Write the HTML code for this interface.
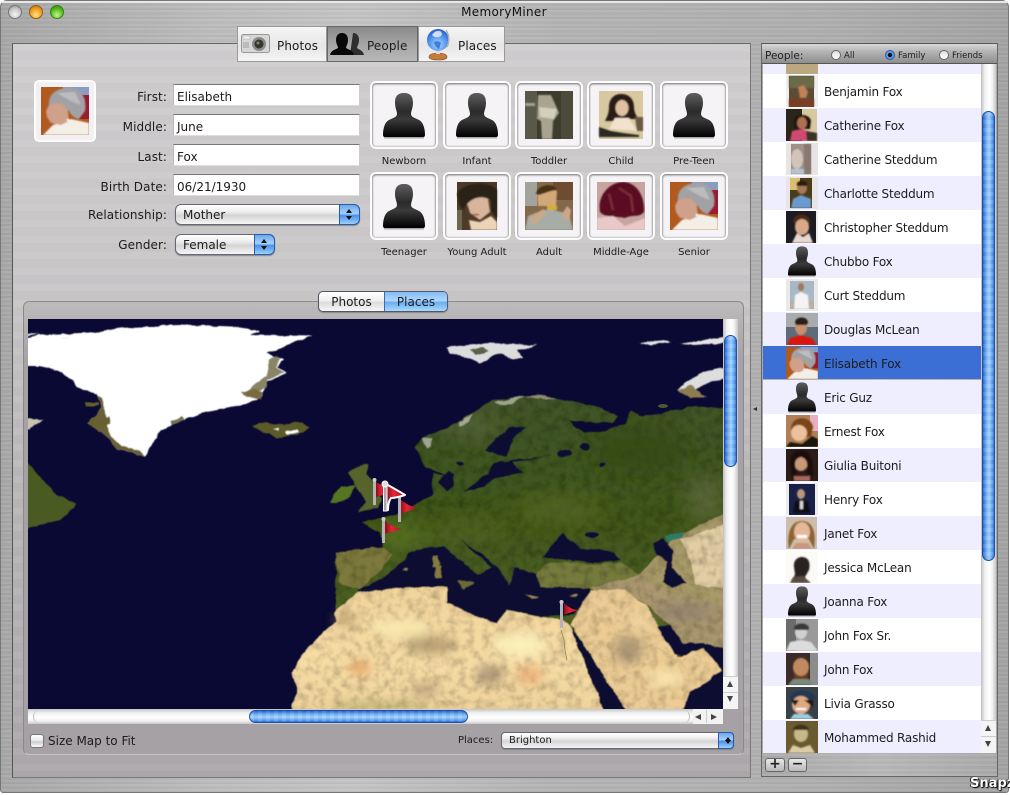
<!DOCTYPE html>
<html><head><meta charset="utf-8"><title>MemoryMiner</title>
<style>
*{box-sizing:border-box}
html,body{margin:0;padding:0;width:1010px;height:795px;overflow:hidden;background:#fff}
body{position:relative;font-family:"DejaVu Sans","Liberation Sans",sans-serif;color:#1c1c1c;font-size:12px}
.lb{position:absolute;text-align:right;right:843px;height:20px;line-height:20px;font-size:12px;white-space:nowrap;letter-spacing:.1px}
.f{position:absolute;left:173px;width:187px;height:22px;background:#fff;border-top:1px solid #777;border-left:1px solid #bbb;border-right:1px solid #ccc;border-bottom:1px solid #ddd;line-height:25px;padding-left:3px;font-size:12px}
.pop{position:absolute;height:21px;border:1px solid #667;border-radius:6px;background:linear-gradient(#fff,#eee 35%,#d4d4d4 55%,#f6f6f6);line-height:21px;padding-left:7px;font-size:12px;box-shadow:0 1px 1px #888}
.pop i{position:absolute;right:-1px;top:-1px;bottom:-1px;width:21px;border-radius:0 6px 6px 0;background:linear-gradient(#6aa8ee,#a8d0fa 45%,#4a90ea 55%,#9cd0fc);border:1px solid #2a5aa8}
.pop i:before,.pop i:after{content:"";position:absolute;left:6px;border-left:3.5px solid transparent;border-right:3.5px solid transparent}
.pop i:before{top:4px;border-bottom:4px solid #111}
.pop i:after{bottom:4px;border-top:4px solid #111}
.w{position:absolute;width:68px;height:68px;border:2px solid #fdfdfd;border-radius:6px;background:#f5f3f6;box-shadow:inset 0 1px 2px #777,inset 0 0 2px #999}
.w svg{position:absolute;left:8px;top:8px;width:48px;height:48px}
.c{position:absolute;width:68px;text-align:center;font-size:10px;white-space:nowrap;height:14px;line-height:14px}
.r{position:absolute;left:763px;width:218px;height:34px;font-size:12px;line-height:37px;padding-left:61px;white-space:nowrap;background:#fff;color:#1c1c1c;letter-spacing:-.2px}
.r.l{background:#eeeeff}
.r.s{background:#3b6fd6;height:33px}
.r svg{position:absolute;left:23px;top:1px;width:32px;height:32px}
.vt{position:absolute;background:linear-gradient(to right,#bdbdbd,#f0f0f0 25%,#fff 55%,#f2f2f2 75%,#c6c6c6)}
.kv{position:absolute;border:1px solid #1c4fa8;border-radius:7px;background:repeating-linear-gradient(rgba(255,255,255,.08) 0 4px,rgba(0,0,40,.03) 4px 8px),linear-gradient(to right,#2a66cc,#74b2f6 30%,#a6d2fc 55%,#5ea0ee 85%,#2f70d6)}
.tab{position:absolute;top:26px;height:36px;line-height:39px;font-size:12px;letter-spacing:.1px;border:1px solid #999;background:linear-gradient(#f6f6f6,#e6e6e6 55%,#f4f4f4)}
.rd{position:absolute;width:10px;height:10px;border-radius:50%;border:1px solid #666;background:linear-gradient(#ddd,#fff)}
.rt{position:absolute;top:49px;font-size:8.5px;height:12px;line-height:15px}
</style></head>
<body>
<svg width="0" height="0" style="position:absolute">
<defs>
<linearGradient id="sh" x1="0" y1="0" x2="0" y2="1"><stop offset="0" stop-color="#5e5e5e"/><stop offset=".42" stop-color="#2a2a2a"/><stop offset=".6" stop-color="#3a3a3a"/><stop offset="1" stop-color="#000"/></linearGradient>
<linearGradient id="fl" x1="0" y1="0" x2="1" y2="0"><stop offset="0" stop-color="#8c0c18"/><stop offset=".4" stop-color="#e02838"/><stop offset="1" stop-color="#b00c1c"/></linearGradient>
<filter id="b"><feGaussianBlur stdDeviation=".7"/></filter>
<filter id="b5"><feGaussianBlur stdDeviation="5"/></filter>
<filter id="b9"><feGaussianBlur stdDeviation="10"/></filter>
<filter id="soft"><feGaussianBlur stdDeviation=".5"/></filter>
<symbol id="sil" viewBox="0 0 48 48"><path d="M24 2C31 2 33 6 33 12C33 17 31 20 31 23C31 26 35 27 39 29C43 31 45 37 45 44Q45 46 43 46L5 46Q3 46 3 44C3 37 5 31 9 29C13 27 17 26 17 23C17 20 15 17 15 12C15 6 17 2 24 2Z" fill="url(#sh)"/><rect x="4" y="46" width="40" height="1.5" fill="#aaa"/></symbol>
<symbol id="senior" viewBox="0 0 48 48"><rect width="48" height="48" fill="#b05a20"/><rect x="22" width="26" height="10" fill="#8a9cc0"/><rect x="38" y="8" width="10" height="24" fill="#9a1c30"/><g filter="url(#b)"><path d="M2 48L12 38L30 32L48 36V48Z" fill="#f4efe6"/><path d="M5 24L9 16L26 16L28 34L20 38L10 36L6 30Z" fill="#cfa08a"/><path d="M8 18C7 6 18 0 30 1C41 2 46 12 44 24L38 32C33 31 30 28 28 24C25 22 23 18 20 16C16 15 11 17 8 18Z" fill="#a2a2a6"/><path d="M16 6L34 5L40 18L30 14Z" fill="#bcbcc0"/><rect x="26" y="32" width="2" height="2" fill="#fff"/></g></symbol>
<symbol id="young" viewBox="0 0 48 48"><rect x="4" width="40" height="48" fill="#4c3a26"/><rect x="4" y="28" width="5" height="20" fill="#6e6650"/><g filter="url(#b)"><path d="M13 18L24 12L35 16L37 30L27 38L17 31Z" fill="#d8b49a"/><path d="M4 12C8 0 38 -2 44 8L44 36L38 30L38 18C30 14 22 14 14 22L10 28L6 22Z" fill="#2c2016"/><path d="M16 38L27 40L38 34L44 40V48H18Z" fill="#ecd4b8"/><path d="M20 32h6v1.500h-6z" fill="#a8484a"/></g></symbol>
<symbol id="adult" viewBox="0 0 48 48"><rect width="48" height="48" fill="#84684a"/><rect width="12" height="24" fill="#a0a49c"/><rect x="28" y="0" width="20" height="18" fill="#6e4c30"/><g filter="url(#b)"><path d="M12 10C14 2 30 2 32 10L31 24H13Z" fill="#d2a878"/><path d="M11 12C12 2 30 0 32 8L26 9L14 13Z" fill="#4a3016"/><path d="M0 48L3 34L18 28H28L44 32L48 48Z" fill="#a6aca6"/><path d="M4 37L18 27L22 31L8 44Z" fill="#c8a888"/><path d="M36 34L42 24L46 28L44 40Z" fill="#c8a888"/><rect x="22" y="24" width="10" height="4" fill="#d8b020"/></g></symbol>
<symbol id="middle" viewBox="0 0 48 48"><rect width="48" height="48" fill="#c8a4a0"/><g filter="url(#b)"><path d="M3 30C0 12 14 0 26 0C38 0 48 12 47 30C42 36 36 32 28 36C20 34 8 36 3 30Z" fill="#5a1020"/><path d="M22 6L34 14L36 30M12 12L16 28" stroke="#7c2a38" stroke-width="2.500" fill="none"/><path d="M0 36L16 34L28 44L48 36V48H0Z" fill="#e8c8c8"/></g></symbol>
<symbol id="child" viewBox="0 0 48 48"><rect width="44" height="48" x="2" fill="#d8c8a0"/><g filter="url(#b)"><path d="M8 30C10 26 12 22 12 16C12 8 17 3 24 3C32 3 37 8 37 16C37 22 40 26 42 28L32 28L16 30Z" fill="#2c1c14"/><ellipse cx="25" cy="17" rx="6.500" ry="8" fill="#e0c0a0"/><path d="M12 38L18 27H32L40 40Z" fill="#f0e2cc"/><path d="M2 36L14 40L26 42L42 44V46L2 46Z" fill="#2c2a20"/><path d="M38 26h8v14h-6z" fill="#6a5a44"/></g></symbol>
<symbol id="toddler" viewBox="0 0 48 48"><rect width="48" height="48" fill="#3e3c2c"/><rect width="12" height="48" fill="#5a5848"/><rect x="36" width="12" height="48" fill="#4c4a38"/><g filter="url(#b)"><path d="M13 4L26 4L34 22L28 30L27 48H17L16 30L12 28Z" fill="#a8a490"/><path d="M14 16L32 18L29 28L15 26Z" fill="#d2cfba"/><rect x="0" y="12" width="10" height="3" fill="#a4a290"/></g></symbol>
</defs></svg>

<!-- window metal -->
<div style="position:absolute;left:0;top:0;width:1009px;height:793px;border-radius:7px 7px 3px 3px;border:1px solid #777;background:repeating-linear-gradient(rgba(255,255,255,.05) 0 2px,rgba(0,0,0,.02) 2px 5px,rgba(255,255,255,.03) 5px 7px,rgba(0,0,0,.035) 7px 9px),linear-gradient(to right,#a8a8a8,#bcbcbc 20%,#c4c4c4 35%,#b4b4b4 55%,#b0b0b0 80%,#a4a4a4)"></div>
<div style="position:absolute;left:1px;top:1px;right:2px;height:2px;background:#e8e8e8"></div>
<div style="position:absolute;left:0;top:0;width:1010px;height:22px;text-align:center;line-height:24px;font-size:12px;color:#111;padding-right:2px;letter-spacing:.3px">MemoryMiner</div>
<!-- traffic lights -->
<div style="position:absolute;left:8px;top:5px;width:14px;height:14px;border-radius:50%;border:1px solid #777;background:radial-gradient(circle at 50% 70%,#f4f4f4,#c8c8c8 55%,#8e8e8e)"></div>
<div style="position:absolute;left:29px;top:5px;width:14px;height:14px;border-radius:50%;border:1px solid #9a5a10;background:radial-gradient(circle at 50% 75%,#ffe08a,#f2a020 55%,#b86a10)"></div>
<div style="position:absolute;left:50px;top:5px;width:14px;height:14px;border-radius:50%;border:1px solid #3c7c1c;background:radial-gradient(circle at 50% 75%,#c8f48a,#58c020 55%,#2c8010)"></div>

<!-- left main panel -->
<div style="position:absolute;left:12px;top:43px;width:739px;height:735px;border:1px solid #555;border-bottom-color:#777;border-right-color:#777;border-top-color:#666;background:repeating-linear-gradient(rgba(255,255,255,.04) 0 7px,rgba(0,0,0,.012) 7px 16px),linear-gradient(#cfcdce,#c8c6c7 35%,#bab7b9 60%,#aca8ab)"></div>

<!-- tabs -->
<div class="tab" style="left:237px;width:90px;padding-left:39px">Photos</div>
<div class="tab" style="left:327px;width:91px;padding-left:39px;border-color:#666;background:linear-gradient(#8a8a8a,#a4a4a4 50%,#b8b8b8)">People</div>
<div class="tab" style="left:418px;width:87px;padding-left:39px">Places</div>
<svg style="position:absolute;left:241px;top:34px" width="30" height="20"><rect x=".5" y=".5" width="28" height="18" rx="2" fill="#d6d6d6" stroke="#999"/><rect x="2" y="2" width="7" height="3" fill="#f2f2f2" stroke="#aaa" stroke-width=".5"/><rect x="2" y="8" width="6" height="6" fill="#bbb"/><circle cx="18" cy="10" r="7" fill="#8a8a8a"/><circle cx="18" cy="10" r="4.5" fill="#33382c"/><circle cx="17" cy="9" r="1.5" fill="#7c8668"/></svg>
<svg style="position:absolute;left:330px;top:32px" width="34" height="24"><path d="M23 1c4 0 6 3 6 7c0 4-2 6-2 8c2 2 6 2 7 7h-14z" fill="#2e2e2e"/><path d="M12 1c4 0 6 3 6 7c0 4-2 6-2 8c3 2 7 2 8 7H0c1-5 5-5 8-7c0-2-2-4-2-8c0-4 2-7 6-7z" fill="#080808"/></svg>
<svg style="position:absolute;left:426px;top:27px" width="26" height="34"><path d="M3 30c0-3 5-4 9-4s9 1 9 4c0 2-4 3-9 3s-9-1-9-3z" fill="#c87a38" stroke="#7a4a20" stroke-width=".6"/><rect x="10" y="22" width="4" height="5" fill="#d8d8d8"/><defs><radialGradient id="gl" cx=".5" cy=".7" r=".75"><stop offset="0" stop-color="#a8d8ff"/><stop offset=".6" stop-color="#4a8cea"/><stop offset="1" stop-color="#1c52b8"/></radialGradient></defs><circle cx="12" cy="13" r="11" fill="url(#gl)"/><path d="M6 8q3-5 8-4q3 2 1 5q-5 3-9-1z" fill="#e4f0ff" opacity=".85"/><path d="M8 15q4-2 7 1l-2 6q-4-2-5-7z" fill="#2c66cc" opacity=".8"/><path d="M20 3q5 8 1 17" stroke="#b0b0b0" stroke-width="1.500" fill="none"/></svg>

<!-- avatar -->
<div class="w" style="left:34px;top:80px;width:62px;height:62px;border-width:2px;box-shadow:none;background:#f2f0f3;border-radius:5px"><svg style="left:5px;top:5px;width:48px;height:48px"><use href="#senior"/></svg></div>

<!-- form -->
<div class="lb" style="top:87px">First:</div>
<div class="lb" style="top:117px">Middle:</div>
<div class="lb" style="top:147px">Last:</div>
<div class="lb" style="top:177px">Birth Date:</div>
<div class="lb" style="top:205px">Relationship:</div>
<div class="lb" style="top:235px">Gender:</div>
<div class="f" style="top:84px">Elisabeth</div>
<div class="f" style="top:114px">June</div>
<div class="f" style="top:144px">Fox</div>
<div class="f" style="top:174px">06/21/1930</div>
<div class="pop" style="left:175px;top:204px;width:185px">Mother<i></i></div>
<div class="pop" style="left:175px;top:234px;width:100px">Female<i></i></div>

<!-- wells -->
<div class="w" style="left:370px;top:81px"><svg><use href="#sil"/></svg></div>
<div class="w" style="left:443px;top:81px"><svg><use href="#sil"/></svg></div>
<div class="w" style="left:515px;top:81px"><svg><use href="#toddler"/></svg></div>
<div class="w" style="left:587px;top:81px"><svg><use href="#child"/></svg></div>
<div class="w" style="left:660px;top:81px"><svg><use href="#sil"/></svg></div>
<div class="w" style="left:370px;top:172px"><svg><use href="#sil"/></svg></div>
<div class="w" style="left:443px;top:172px"><svg><use href="#young"/></svg></div>
<div class="w" style="left:515px;top:172px"><svg><use href="#adult"/></svg></div>
<div class="w" style="left:587px;top:172px"><svg><use href="#middle"/></svg></div>
<div class="w" style="left:660px;top:172px"><svg><use href="#senior"/></svg></div>
<div class="c" style="left:370px;top:155px">Newborn</div>
<div class="c" style="left:443px;top:155px">Infant</div>
<div class="c" style="left:515px;top:155px">Toddler</div>
<div class="c" style="left:587px;top:155px">Child</div>
<div class="c" style="left:660px;top:155px">Pre-Teen</div>
<div class="c" style="left:370px;top:246px">Teenager</div>
<div class="c" style="left:443px;top:246px">Young Adult</div>
<div class="c" style="left:515px;top:246px">Adult</div>
<div class="c" style="left:587px;top:246px">Middle-Age</div>
<div class="c" style="left:660px;top:246px">Senior</div>

<!-- group box -->
<div style="position:absolute;left:23px;top:301px;width:721px;height:454px;border:1px solid #8a8a8a;border-bottom-color:#c4c2c3;border-radius:6px;background:linear-gradient(#bdbbbc,#a5a1a4 60px,#a5a1a4)"></div>
<!-- segmented -->
<div style="position:absolute;left:318px;top:291px;width:130px;height:21px;border:1px solid #556;border-radius:5px;background:linear-gradient(#fff,#f0f0f0 45%,#dcdcdc 55%,#f8f8f8);box-shadow:0 1px 1px #888;overflow:hidden">
<div style="position:absolute;left:0;width:65px;top:0;height:19px;line-height:21px;text-align:center;font-size:12px">Photos</div>
<div style="position:absolute;left:65px;right:0;top:0;height:19px;line-height:21px;text-align:center;font-size:12px;border-left:1px solid #3a6ab0;background:linear-gradient(#80bcf6,#b0d8fc 45%,#6cacf2 55%,#a8dcfc)">Places</div></div>

<!-- map -->
<svg style="position:absolute;left:28px;top:319px" width="695" height="390" viewBox="28 319 695 390">
<defs>
<filter id="tx" x="0" y="0" width="100%" height="100%"><feTurbulence type="fractalNoise" baseFrequency=".12" numOctaves="3" seed="4"/><feColorMatrix values="0 0 0 0 0  0 0 0 0 0  0 0 0 0 0  .9 0 0 0 -.36"/><feComposite in2="SourceAlpha" operator="in" result="n"/><feMerge><feMergeNode in="SourceGraphic"/><feMergeNode in="n"/></feMerge></filter>
<filter id="coast" filterUnits="userSpaceOnUse" x="0" y="300" width="760" height="430"><feTurbulence type="fractalNoise" baseFrequency=".09" numOctaves="4" seed="11" result="t"/><feDisplacementMap in="SourceGraphic" in2="t" scale="4" xChannelSelector="R" yChannelSelector="G"/><feGaussianBlur stdDeviation=".4"/></filter>
<clipPath id="euc"><path d="M336 552L383 547L380 533L362 522L378 518L397 515L417 503L432 495L433 473L447 475L425 467L415 447L423 438L457 423L493 400L537 395L560 399L603 408L618 417L612 423L570 421L583 432L603 432L625 424L630 410L643 417L690 407L735 408L735 720L336 720Z"/></clipPath>
<linearGradient id="eu" x1="0" y1="0" x2="0" y2="1"><stop offset="0" stop-color="#42552a"/><stop offset=".35" stop-color="#40561e"/><stop offset=".7" stop-color="#4e6024"/><stop offset="1" stop-color="#5a5e2c"/></linearGradient>
<linearGradient id="af" x1="0" y1="0" x2="0" y2="1"><stop offset="0" stop-color="#f2d49c"/><stop offset=".6" stop-color="#f6dca4"/><stop offset="1" stop-color="#ecd098"/></linearGradient>
</defs>
<rect x="28" y="319" width="695" height="390" fill="#0a0933"/>
<g filter="url(#coast)">
<!-- Greenland -->
<path d="M20 339L40 335L80 333L100 332L120 328L180 325L233 327L260 331L250 335L313 336L287 345L267 353L283 360L277 368L287 373L267 382L263 397L250 403L203 413L177 423L160 430L145 457L133 452L117 450L108 438L88 423L102 407L97 395L77 387L63 372L40 366L20 366Z" fill="#fff"/>
<path d="M20 332l20 2l-20 2zM60 338l8-1v2z" fill="#e8e8f0"/>
<path d="M63 372L77 387L97 395L103 399L104 410L108 424L110 436L122 446L140 450L145 457L133 452L117 450L108 438L88 423L102 407L97 395L77 387Z" fill="#6a6034"/>
<path d="M86 402l12-1l1 4l-12 1zM89 420l20-3l2 7l-20 2z" fill="#665e2e"/>
<path d="M270 358l7-2l3 4l-4 8l8 5l-16 7l-2 8l-8 5l-12 0l8-9l12-8z" fill="#6a6640" opacity=".8"/>
<path d="M240 392l16-3l8 4l-2 6l-14-1z" fill="#7a6a40"/>
<path d="M170 421l12-4l2 3l-12 5z" fill="#777050"/>
<!-- Baffin -->
<path d="M20 417L43 420L30 429L20 429Z" fill="#c8c4b0"/>
<!-- Iceland -->
<path d="M252 425L267 422L273 425L303 422L310 427L297 435L277 438L263 432Z" fill="#5c5a28"/>
<path d="M285 431l12-1l2 2l-12 3zM273 430l6-1v2z" fill="#fff"/>
<!-- Canada -->
<path d="M20 455L37 473L53 492L75 503L73 509L60 520L40 525L20 532Z" fill="#4a5a22"/>
<!-- Ireland+UK -->
<path d="M340 487L355 485L350 498L338 503L330 503L334 495Z" fill="#567422"/>
<path d="M347 472L362 465L368 463L367 474L373 482L382 500L377 508L358 512L367 502L358 490Z" fill="#56642a"/>
<!-- Eurasia -->
<path d="M336 552L383 547L380 533L362 522L378 518L397 515L417 503L432 495L433 473L447 475L425 467L415 447L423 438L457 423L493 400L537 395L560 399L603 408L618 417L612 423L570 421L583 432L603 432L625 424L630 410L643 417L690 407L735 408L735 720L336 720Z" fill="url(#eu)" filter="url(#tx)"/>
<g clip-path="url(#euc)"><g filter="url(#b9)">
<ellipse cx="400" cy="535" rx="28" ry="14" fill="#5e7a24" opacity=".7"/>
<ellipse cx="470" cy="530" rx="40" ry="12" fill="#566a26" opacity=".6"/>
<ellipse cx="560" cy="510" rx="45" ry="16" fill="#5a6c26" opacity=".6"/>
<ellipse cx="640" cy="450" rx="50" ry="25" fill="#334814" opacity=".7"/>
<ellipse cx="470" cy="425" rx="30" ry="12" fill="#6a7048" opacity=".5"/>
<ellipse cx="705" cy="500" rx="18" ry="26" fill="#6a7048" opacity=".6"/>
</g></g>
<!-- Scandinavia snow -->
<path d="M423 438l3 10l4-3l3-6zM460 422l14-8l-5 8l-10 4zM495 402l30-6l-14 8l-12 1z" fill="#c8c8b8" opacity=".7"/>
<path d="M525 396l20-1l12 4l-20 0z" fill="#b0a890" opacity=".7"/>
<!-- Iberia -->
<path d="M335 552L383 547L393 556L375 575L360 590L340 582Z" fill="#7e7a3c" filter="url(#tx)"/>
<!-- Turkey -->
<path d="M537 573L545 565L565 562L593 565L620 562L640 575L625 585L590 588L540 587Z" fill="#767a3c" filter="url(#tx)"/>
<!-- central asia sand -->
<path d="M640 575L672 540L700 525L735 510L735 650L703 643L683 643L670 625L640 600Z" fill="#a89a68" filter="url(#tx)"/>
<path d="M680 540L735 520L735 590L695 585L690 560Z" fill="#e2ceA4" filter="url(#tx)"/>
<path d="M590 588L640 575L660 590L700 600L735 605L735 650L703 643L683 643L670 625L640 600L595 592Z" fill="#ab9870" filter="url(#tx)"/>
<!-- seas -->
<g fill="#0a0933">
<path d="M485 450L497 437L510 427L528 427L513 438L507 457L490 453Z"/>
<path d="M470 487L487 473L493 463L517 460L552 455L513 463L523 473L497 478L483 487L463 492Z"/>
<path d="M447 470l6 4l2 12l-8 6l-8-10z"/>
<ellipse cx="564" cy="453" rx="7" ry="4"/><ellipse cx="585" cy="447" rx="5" ry="4"/><ellipse cx="602" cy="465" rx="3" ry="2"/><ellipse cx="461" cy="463" rx="4" ry="2"/>
<path d="M358 590L380 580L387 573L405 560L408 552L437 546L443 546L478 574L492 568L459 539L480 552L497 567L510 585L515 567L537 573L540 587L590 588L588 598L573 615L540 617L507 610L497 623L477 617L447 603L447 587L413 587L380 590L358 596Z"/>
<path d="M543 558L550 547L563 533L573 542L580 547L613 552L620 560L593 563L567 560Z"/>
<ellipse cx="592" cy="535" rx="7" ry="3"/>
<path d="M653 543L663 538L673 550L672 567L688 583L673 588L662 582L667 563L655 553Z"/>
</g>
<path d="M665 536l20-4l-2 6l-14 4z" fill="#2f7a62"/>
<!-- Med islands -->
<path d="M433 556l5-1l1 9l-1 3l-5 0zM436 566h5v12h-6z" fill="#857a40"/>
<path d="M457 581l14 0l4 2l-12 6z" fill="#6a6c34"/>
<path d="M525 595l14 1l-6 2zM568 596l10-2l-2 3z" fill="#9c8c54"/>
<path d="M402 570l6-1l-2 3z" fill="#9c8c54"/>
<!-- Arabia -->
<path d="M570 625L590 590L625 590L645 605L670 645L678 657L703 648L722 670L690 693L677 720L627 720L620 700L600 670L580 638Z" fill="#eccc94" filter="url(#tx)"/>
<!-- gulf -->
<path d="M657 627L670 625L683 643L703 643L735 650L735 720L677 720L690 693L722 670L703 648L685 655L675 655L665 640Z" fill="#0a0933"/>
<!-- Africa -->
<path d="M357 593L380 590L413 587L447 587L447 603L477 617L497 623L507 610L540 617L563 620L570 627L590 677L608 720L290 720L297 687L292 673L303 653L320 635L337 622L333 613Z" fill="url(#af)" filter="url(#tx)"/>
<!-- red sea -->
<path d="M570 627L580 638L600 670L620 700L632 720L608 720L590 677Z" fill="#0a0933"/>
</g>
<!-- Africa mottles -->
<g filter="url(#b5)">
<ellipse cx="430" cy="645" rx="26" ry="10" fill="#a8906a" opacity=".7"/>
<ellipse cx="490" cy="675" rx="14" ry="10" fill="#95806a" opacity=".7"/>
<ellipse cx="425" cy="690" rx="14" ry="7" fill="#a89070" opacity=".6"/>
<ellipse cx="360" cy="668" rx="12" ry="5" fill="#e48c50" opacity=".8"/>
<ellipse cx="400" cy="628" rx="30" ry="9" fill="#f8e8ae"/>
<ellipse cx="520" cy="645" rx="26" ry="12" fill="#fbeeb8"/>
<ellipse cx="530" cy="675" rx="14" ry="9" fill="#e89e68" opacity=".6"/>
<ellipse cx="345" cy="620" rx="12" ry="5" fill="#a48a60" opacity=".7"/>
<ellipse cx="628" cy="650" rx="14" ry="14" fill="#96826a" opacity=".7"/>
<ellipse cx="665" cy="678" rx="18" ry="9" fill="#f8e2a8"/>
<ellipse cx="380" cy="706" rx="50" ry="3" fill="#9a9a58" opacity=".8"/>
<ellipse cx="685" cy="612" rx="28" ry="9" fill="#8c7c6e" opacity=".6"/>
<ellipse cx="640" cy="622" rx="12" ry="9" fill="#f0d4a0" opacity=".8"/>
</g>
<path d="M561 630l3 10l1 10l2 10" stroke="#7a8a48" stroke-width=".7" fill="none"/>
<!-- Arctic islands -->
<g filter="url(#coast)">
<path d="M447 347L490 343L538 345L517 350L523 358L513 360L500 353L480 364L465 357L450 353Z" fill="#dcdcdc"/>
<path d="M470 350l14-3l4 4l-12 4z" fill="#5a6048"/>
<path d="M638 343l28-3l4 2l-20 3zM679 344l56-9v7l-40 3z" fill="#e4e4e4"/>
<path d="M677 390L687 382L703 372L735 366L735 374L703 385L695 390L707 397L690 397Z" fill="#ddd"/>
<path d="M677 390L692 385L695 390L707 397L690 397Z" fill="#8c7c50"/>
</g>
<ellipse cx="663" cy="406" rx="5" ry="2" fill="#4a5a30"/>
<!-- Flags -->
<g>
<path d="M376 482L389 489L387 494L376 497Z" fill="url(#fl)"/>
<rect x="373" y="479" width="3" height="26" fill="#b4b4b8"/><circle cx="374.500" cy="480" r="2" fill="#ccc"/>
<path d="M400 499Q408 506 417 508Q408 511 400 514Z" fill="url(#fl)"/>
<rect x="398" y="497" width="3" height="25" fill="#b4b4b8"/>
<path d="M386 484Q397 490 405 495Q396 498 391 498Q388 502 388 510L386 510Z" fill="url(#fl)" stroke="#fff" stroke-width="2" stroke-linejoin="round"/>
<rect x="383.500" y="484" width="3.500" height="27" fill="#a8a8ac" stroke="#fff" stroke-width="1"/><circle cx="385" cy="484" r="3" fill="#ddd" stroke="#fff"/>
<path d="M385 521Q393 528 402 529Q393 531 385 534Z" fill="url(#fl)"/>
<rect x="382" y="518" width="3" height="25" fill="#b4b4b8"/><circle cx="383.500" cy="519" r="2" fill="#ccc"/>
<path d="M564 603Q571 610 579 610Q571 612 564 615Z" fill="url(#fl)"/>
<rect x="560" y="601" width="3" height="27" fill="#b4b4b8"/><circle cx="561.500" cy="602" r="2" fill="#ccc"/>
</g>
</svg>

<!-- map scrollbars -->
<div class="vt" style="left:723px;top:319px;width:15px;height:390px"></div>
<div class="kv" style="left:724px;top:335px;width:13px;height:132px"></div>
<div style="position:absolute;left:723px;top:676px;width:15px;height:33px;background:#f4f4f4;border-top:1px solid #ccc"></div>
<div style="position:absolute;left:727px;top:681px;border-left:3.500px solid transparent;border-right:3.500px solid transparent;border-bottom:6px solid #444"></div>
<div style="position:absolute;left:723px;top:692px;width:15px;height:1px;background:#ccc"></div>
<div style="position:absolute;left:727px;top:696px;border-left:3.500px solid transparent;border-right:3.500px solid transparent;border-top:6px solid #444"></div>
<div style="position:absolute;left:28px;top:709px;width:695px;height:15px;background:linear-gradient(#c4c4c4,#f0f0f0 25%,#fff 55%,#f0f0f0 80%,#c8c8c8)"></div>
<div style="position:absolute;left:33px;top:710px;width:657px;height:13px;border:1px solid #bbb;border-top:0;border-bottom:0;border-radius:7px"></div>
<div style="position:absolute;left:249px;top:710px;width:219px;height:13px;border:1px solid #1c4fa8;border-radius:7px;background:repeating-linear-gradient(to right,rgba(255,255,255,.08) 0 4px,rgba(0,0,40,.03) 4px 8px),linear-gradient(#2a66cc,#74b2f6 30%,#a6d2fc 55%,#5ea0ee 85%,#2f70d6)"></div>
<div style="position:absolute;left:693px;top:709px;width:30px;height:15px;background:#f2f2f2"></div>
<div style="position:absolute;left:695px;top:714px;border-top:3.500px solid transparent;border-bottom:3.500px solid transparent;border-right:6px solid #444"></div>
<div style="position:absolute;left:706px;top:710px;width:1px;height:13px;background:#ccc"></div>
<div style="position:absolute;left:711px;top:714px;border-top:3.500px solid transparent;border-bottom:3.500px solid transparent;border-left:6px solid #444"></div>
<div style="position:absolute;left:723px;top:709px;width:15px;height:15px;background:#a5a1a4"></div>

<!-- bottom controls -->
<div style="position:absolute;left:30px;top:734px;width:14px;height:14px;border:1px solid #777;border-radius:3px;background:linear-gradient(#fff,#e8e8e8 50%,#ccc 55%,#fafafa)"></div>
<div style="position:absolute;left:48px;top:733px;font-size:12px;height:16px;line-height:17px;white-space:nowrap">Size Map to Fit</div>
<div style="position:absolute;left:458px;top:734px;font-size:10px;height:14px;line-height:14px">Places:</div>
<div class="pop" style="left:501px;top:732px;width:233px;height:17px;line-height:15px;font-size:10px;border-radius:4px">Brighton<i style="width:16px;border-radius:0 4px 4px 0"></i></div>

<!-- right panel -->
<div style="position:absolute;left:761px;top:43px;width:237px;height:734px;border:1px solid #666;border-top-color:#555;background:repeating-linear-gradient(rgba(255,255,255,.06) 0 2px,rgba(0,0,0,.02) 2px 5px),linear-gradient(to right,#aaa,#b8b8b8 50%,#aaa)"></div>
<div style="position:absolute;left:762px;top:44px;width:235px;height:20px;border-bottom:1px solid #555;background:linear-gradient(#d8d8d8,#b4b4b4 40%,#8e8e8e)"></div>
<div style="position:absolute;left:765px;top:49px;font-size:10.5px;height:14px;line-height:14px">People:</div>
<div class="rd" style="left:831px;top:50px"></div><div class="rt" style="left:844px">All</div>
<div class="rd" style="left:885px;top:50px;background:radial-gradient(circle,#111 2px,#6aaaf0 2.500px,#3a7ad8);border-color:#2a5aa8"></div><div class="rt" style="left:898px">Family</div>
<div class="rd" style="left:939px;top:50px"></div><div class="rt" style="left:952px">Friends</div>

<!-- list -->
<div class="r l" style="top:64px;height:10px;overflow:hidden"><svg style="top:-22px"><rect x="0" y="0" width="32" height="32" fill="#bca880"/></svg></div>
<div class="r" style="top:74px">Benjamin Fox<svg viewBox="0 0 32 32"><rect width="32" height="32" fill="#eee"/><rect x="3" y="1" width="25" height="31" fill="#5c4c34"/><rect x="3" y="1" width="25" height="12" fill="#6a6a48" filter="url(#b)"/><path d="M12 12l6-2l4 7l-2 6h-6z" fill="#c08058" filter="url(#b)"/><rect x="3" y="24" width="25" height="8" fill="#7a3c28" filter="url(#b)"/></svg></div>
<div class="r l" style="top:108px">Catherine Fox<svg viewBox="0 0 32 32"><rect width="32" height="32" fill="#2c2418"/><rect x="16" width="15" height="32" fill="#d8c8a0"/><rect x="31" width="1" height="32" fill="#eef"/><g filter="url(#b)"><path d="M8 12c0-8 16-8 17 0l-1 8H9z" fill="#1c1410"/><ellipse cx="16" cy="14" rx="5" ry="6" fill="#b07050"/><path d="M4 32l2-10l10-2l10 4l2 8z" fill="#d04870"/><path d="M20 22l11 2v8H21z" fill="#3a3028"/></g></svg></div>
<div class="r" style="top:142px">Catherine Steddum<svg viewBox="0 0 32 32"><rect width="32" height="32" fill="#e8e4e4"/><rect x="5" y="1" width="20" height="30" fill="#a09088"/><g filter="url(#b)"><ellipse cx="11" cy="16" rx="6" ry="10" fill="#d0c4bc"/><rect x="5" y="26" width="16" height="5" fill="#b4c4d4"/><rect x="18" y="1" width="7" height="30" fill="#887870"/></g></svg></div>
<div class="r l" style="top:176px">Charlotte Steddum<svg viewBox="0 0 32 32"><rect width="32" height="32" fill="#e8e4e8"/><rect x="4" y="1" width="22" height="30" fill="#4a3c18"/><rect x="4" y="1" width="10" height="12" fill="#d8c070"/><g filter="url(#b)"><ellipse cx="16" cy="11" rx="5" ry="6" fill="#a87858"/><path d="M11 6c2-3 8-3 10 0v3H11z" fill="#2c1c10"/><path d="M5 31l2-9l8-4l10 4v9z" fill="#6a9ad0"/></g></svg></div>
<div class="r" style="top:210px">Christopher Steddum<svg viewBox="0 0 32 32"><rect width="32" height="32" fill="#1c1c22"/><rect x="30" width="2" height="32" fill="#eee"/><g filter="url(#b)"><path d="M7 10c0-8 16-9 17 0l-1 3H9z" fill="#4a2c18"/><ellipse cx="16" cy="16" rx="7" ry="8" fill="#d8a888"/><path d="M6 32l5-10l6 4l6-4l4 10z" fill="#e8d8d0"/></g></svg></div>
<div class="r l" style="top:244px">Chubbo Fox<svg viewBox="0 0 48 48"><use href="#sil"/></svg></div>
<div class="r" style="top:278px">Curt Steddum<svg viewBox="0 0 32 32"><rect width="32" height="32" fill="#ebe8ea"/><rect x="4" y="2" width="24" height="28" fill="#a8b8c4"/><rect x="4" y="22" width="24" height="8" fill="#b8b0a0"/><g filter="url(#b)"><ellipse cx="15" cy="8" rx="3" ry="4" fill="#a07858"/><path d="M8 30l1-14l6-3l7 3l1 14z" fill="#f4f4f4"/></g></svg></div>
<div class="r l" style="top:312px">Douglas McLean<svg viewBox="0 0 32 32"><rect width="32" height="32" fill="#a8acac"/><rect y="14" width="32" height="18" fill="#5c6c78"/><g filter="url(#b)"><ellipse cx="15" cy="14" rx="6" ry="8" fill="#c89070"/><path d="M9 9c1-6 12-6 13 0l-1 3H10z" fill="#2a1c14"/><path d="M1 32l3-7l11-3l11 3l5 7z" fill="#d81810"/></g></svg></div>
<div class="r s" style="top:346px">Elisabeth Fox<svg viewBox="0 0 48 48"><use href="#senior"/></svg></div>
<div class="r l" style="top:380px">Eric Guz<svg viewBox="0 0 48 48"><use href="#sil"/></svg></div>
<div class="r" style="top:414px">Ernest Fox<svg viewBox="0 0 32 32"><rect width="32" height="32" fill="#b08058"/><rect x="24" width="8" height="16" fill="#e8b0c0"/><g filter="url(#b)"><path d="M5 14c0-14 20-14 22-2l-2 10H7z" fill="#7a4414"/><ellipse cx="13" cy="18" rx="8" ry="8" fill="#ecc09c"/><path d="M0 32l4-5l12 2l10-8l6 3v8z" fill="#1c1410"/></g></svg></div>
<div class="r l" style="top:448px">Giulia Buitoni<svg viewBox="0 0 32 32"><rect width="32" height="32" fill="#2c1c18"/><g filter="url(#b)"><ellipse cx="15" cy="13" rx="7" ry="9" fill="#c89878"/><path d="M15 1c-9 0-12 8-11 16l3 14l4-8c-3-8-3-13 4-15c7 2 7 8 5 15l6 7c2-10 2-29-11-29z" fill="#1c100c"/><rect x="8" y="27" width="16" height="5" fill="#a86858"/></g></svg></div>
<div class="r" style="top:482px">Henry Fox<svg viewBox="0 0 32 32"><rect width="32" height="32" fill="#ececec"/><rect x="3" y="1" width="26" height="31" fill="#1a2048"/><g filter="url(#b)"><ellipse cx="15" cy="11" rx="4" ry="5" fill="#b89878"/><path d="M7 30l2-11l6-3l7 3l2 11z" fill="#0c0c14"/><path d="M14 18h3v8h-3z" fill="#d8d8d8"/></g></svg></div>
<div class="r l" style="top:516px">Janet Fox<svg viewBox="0 0 32 32"><rect width="32" height="32" fill="#eeeeff"/><rect width="31" height="32" fill="#cdbeac"/><g filter="url(#b)"><path d="M3 32c-2-12 0-28 13-28c13 0 14 16 12 28l-5-10H8z" fill="#8c6434"/><ellipse cx="16" cy="15" rx="8" ry="10" fill="#e6b898"/><rect x="11" y="18" width="10" height="3" fill="#fff"/><path d="M6 32l4-6l12 0l4 6z" fill="#c89880"/></g></svg></div>
<div class="r" style="top:550px">Jessica McLean<svg viewBox="0 0 32 32"><rect width="32" height="32" fill="#fbfaf6"/><g filter="url(#b)"><path d="M8 16c-1-8 6-12 12-9c4 2 4 8 3 12l-4 7l3 6H6l3-9z" fill="#2c2420"/><path d="M4 32l3-6l10-1l8 7z" fill="#5c4c44"/></g></svg></div>
<div class="r l" style="top:584px">Joanna Fox<svg viewBox="0 0 48 48"><use href="#sil"/></svg></div>
<div class="r" style="top:618px">John Fox Sr.<svg viewBox="0 0 32 32"><rect width="32" height="32" fill="#999"/><rect x="0" width="10" height="32" fill="#6c6c6c"/><g filter="url(#b)"><ellipse cx="15" cy="13" rx="6" ry="7" fill="#d0d0d0"/><path d="M8 9c1-6 14-6 15 0l-1 2H9z" fill="#383838"/><path d="M0 32l4-9l11-2l10 2l7 9z" fill="#dcdcdc"/></g></svg></div>
<div class="r l" style="top:652px">John Fox<svg viewBox="0 0 32 32"><rect width="32" height="32" fill="#3c2c28"/><rect x="24" width="8" height="32" fill="#8c8c8c"/><g filter="url(#b)"><ellipse cx="15" cy="14" rx="8" ry="9" fill="#c08a60"/><path d="M7 17c2 8 14 8 16 0l-2 10H9z" fill="#6a3a20"/><path d="M2 32l5-6l16 0l5 6z" fill="#7a8a78"/></g></svg></div>
<div class="r" style="top:686px">Livia Grasso<svg viewBox="0 0 32 32"><rect width="32" height="32" fill="#384048"/><g filter="url(#b)"><path d="M4 11C6 1 26 1 30 11l-2 2H4z" fill="#243852"/><ellipse cx="15" cy="18" rx="9" ry="9" fill="#e0a880"/><path d="M5 13h8l-4 6zM18 13h9v7z" fill="#1c1410"/><rect x="10" y="21" width="10" height="2" fill="#fff"/><path d="M4 32l4-5h14l6 5z" fill="#9ccce0"/></g></svg></div>
<div class="r l" style="top:720px;height:33px">Mohammed Rashid<svg viewBox="0 0 32 32"><rect width="32" height="32" fill="#6a5a30"/><g filter="url(#b)"><ellipse cx="15" cy="13" rx="7" ry="8" fill="#c8b888"/><path d="M7 9c1-7 15-7 16 0H7z" fill="#3c3018"/><path d="M2 32l5-8l8 3l9-3l5 8z" fill="#dccca4"/></g></svg></div>

<!-- list scrollbar -->
<div class="vt" style="left:981px;top:64px;width:15px;height:689px"></div>
<div class="kv" style="left:982px;top:111px;width:13px;height:450px"></div>
<div style="position:absolute;left:981px;top:720px;width:15px;height:33px;background:#f4f4f4;border-top:1px solid #ccc"></div>
<div style="position:absolute;left:985px;top:725px;border-left:3.500px solid transparent;border-right:3.500px solid transparent;border-bottom:6px solid #444"></div>
<div style="position:absolute;left:981px;top:736px;width:15px;height:1px;background:#ccc"></div>
<div style="position:absolute;left:985px;top:741px;border-left:3.500px solid transparent;border-right:3.500px solid transparent;border-top:6px solid #444"></div>

<!-- +/- -->
<div style="position:absolute;left:765px;top:758px;width:20px;height:14px;border:1px solid #666;border-radius:3px;background:linear-gradient(#e8e8e8,#b8b8b8);text-align:center;line-height:11px;font-size:14px;font-weight:bold;color:#222">+</div>
<div style="position:absolute;left:788px;top:758px;width:19px;height:14px;border:1px solid #666;border-radius:3px;background:linear-gradient(#e8e8e8,#b8b8b8);text-align:center;line-height:11px;font-size:14px;font-weight:bold;color:#222">−</div>

<!-- splitter dot -->
<div style="position:absolute;left:753px;top:407px;border-top:2.500px solid transparent;border-bottom:2.500px solid transparent;border-right:4px solid #333"></div>

<!-- snapz -->
<div style="position:absolute;left:970px;top:775px;width:40px;height:17px;overflow:hidden;font-weight:bold;font-size:13px;line-height:17px;color:#fff;text-shadow:1px 1px 1px #000,-1px 0 1px #000">Snapz</div>
</body></html>
